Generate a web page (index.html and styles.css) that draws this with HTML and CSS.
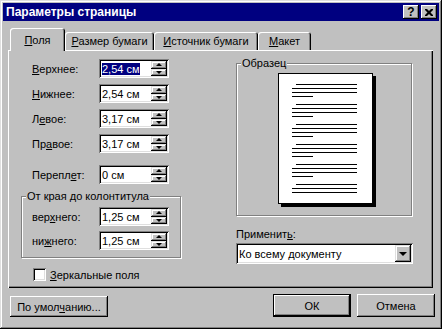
FILE: index.html
```html
<!DOCTYPE html>
<html lang="ru">
<head>
    <meta charset="UTF-8">
    <title>Параметры страницы</title>
    <link rel="stylesheet" href="styles.css">
</head>
<body>
    <div class="window">
        <div class="titlebar">
            <span class="title">Параметры страницы</span>
            <div class="title-btns">
                <span class="tbtn help">?</span>
                <span class="tbtn">
                    <svg width="8" height="7" viewBox="0 0 8 7"><path d="M0 0h2l2 2 2-2h2v1L5.5 3.5 8 6v1H6L4 5 2 7H0V6l2.5-2.5L0 1z" fill="#000"/></svg>
                </span>
            </div>
        </div>

        <div class="tabs">
            <div class="tab active" style="width:55px"><u>П</u>оля</div>
            <div class="tab" style="width:89px"><u>Р</u>азмер бумаги</div>
            <div class="tab" style="width:104px"><u>И</u>сточник бумаги</div>
            <div class="tab" style="width:53px"><u>М</u>акет</div>
        </div>

        <div class="panel">
            <div class="col-left">
                <div class="row">
                    <label><u>В</u>ерхнее:</label>
                    <div class="spin"><span class="val"><span class="sel">2,54 см</span></span><div class="arrows"><span class="arr"><i class="up"></i></span><span class="arr"><i class="down"></i></span></div></div>
                </div>
                <div class="row">
                    <label><u>Н</u>ижнее:</label>
                    <div class="spin"><span class="val">2,54 см</span><div class="arrows"><span class="arr"><i class="up"></i></span><span class="arr"><i class="down"></i></span></div></div>
                </div>
                <div class="row">
                    <label>Л<u>е</u>вое:</label>
                    <div class="spin"><span class="val">3,17 см</span><div class="arrows"><span class="arr"><i class="up"></i></span><span class="arr"><i class="down"></i></span></div></div>
                </div>
                <div class="row">
                    <label>Пр<u>а</u>вое:</label>
                    <div class="spin"><span class="val">3,17 см</span><div class="arrows"><span class="arr"><i class="up"></i></span><span class="arr"><i class="down"></i></span></div></div>
                </div>
                <div class="row spaced">
                    <label>Перепл<u>е</u>т:</label>
                    <div class="spin"><span class="val">0 см</span><div class="arrows"><span class="arr"><i class="up"></i></span><span class="arr"><i class="down"></i></span></div></div>
                </div>

                <div class="group footers">
                    <span class="group-title">От края до колонтитула</span>
                    <div class="row">
                        <label>вер<u>х</u>него:</label>
                        <div class="spin"><span class="val">1,25 см</span><div class="arrows"><span class="arr"><i class="up"></i></span><span class="arr"><i class="down"></i></span></div></div>
                    </div>
                    <div class="row">
                        <label>ни<u>ж</u>него:</label>
                        <div class="spin"><span class="val">1,25 см</span><div class="arrows"><span class="arr"><i class="up"></i></span><span class="arr"><i class="down"></i></span></div></div>
                    </div>
                </div>

                <div class="check-row">
                    <span class="checkbox"></span>
                    <span><u>З</u>еркальные поля</span>
                </div>
            </div>

            <div class="col-right">
                <div class="group sample">
                    <span class="group-title">Образец</span>
                    <svg class="page" width="99" height="135" viewBox="0 0 99 135">
                        <rect x="3" y="3" width="95" height="131" fill="#000"/>
                        <rect x="0.5" y="0.5" width="94" height="130" fill="#fff" stroke="#000"/>
                        <g fill="#000">
                            <rect x="18" y="11" width="61" height="1"/><rect x="14" y="15" width="65" height="1"/><rect x="14" y="19" width="65" height="1"/><rect x="14" y="23" width="21" height="1"/>
                            <rect x="18" y="31" width="61" height="1"/><rect x="14" y="35" width="65" height="1"/><rect x="14" y="39" width="65" height="1"/><rect x="14" y="43" width="21" height="1"/>
                            <rect x="18" y="51" width="61" height="1"/><rect x="14" y="55" width="65" height="1"/><rect x="14" y="59" width="65" height="1"/><rect x="14" y="63" width="21" height="1"/>
                            <rect x="18" y="71" width="61" height="1"/><rect x="14" y="75" width="65" height="1"/><rect x="14" y="79" width="65" height="1"/><rect x="14" y="83" width="21" height="1"/>
                            <rect x="18" y="91" width="61" height="1"/><rect x="14" y="95" width="65" height="1"/><rect x="14" y="99" width="65" height="1"/><rect x="14" y="103" width="21" height="1"/>
                            <rect x="18" y="111" width="61" height="1"/><rect x="14" y="115" width="65" height="1"/><rect x="14" y="119" width="65" height="1"/>
                        </g>
                    </svg>
                </div>
                <div class="apply-label">Применит<u>ь</u>:</div>
                <div class="select">
                    <span class="val">Ко всему документу</span>
                    <span class="drop"><i class="down big"></i></span>
                </div>
            </div>
        </div>

        <div class="footer">
            <button class="btn default-btn">По умол<u>ч</u>анию...</button>
            <div class="btn-group">
                <button class="btn ok">ОК</button>
                <button class="btn">Отмена</button>
            </div>
        </div>
    </div>
</body>
</html>
```

FILE: styles.css
```css
body {
    margin: 0;
    font-family: "Liberation Sans", Arial, sans-serif;
    font-size: 11px;
    color: #000;
    background: #c0c0c0;
}
u {
    text-decoration: underline;
    text-underline-offset: 1px;
}
.window {
    width: 442px;
    height: 329px;
    box-sizing: border-box;
    padding: 3px;
    background: #c0c0c0;
    box-shadow: inset -1px -1px #000, inset 1px 1px #dfdfdf, inset -2px -2px #808080, inset 2px 2px #fff;
}
.titlebar {
    height: 18px;
    background: #000080;
    color: #fff;
    display: flex;
    align-items: center;
    justify-content: space-between;
    padding: 0 2px 0 3px;
}
.title {
    font-weight: bold;
    font-size: 12px;
}
.title-btns {
    display: flex;
    gap: 2px;
}
.tbtn {
    width: 16px;
    height: 14px;
    box-sizing: border-box;
    background: #c0c0c0;
    color: #000;
    display: flex;
    align-items: center;
    justify-content: center;
    box-shadow: inset -1px -1px #000, inset 1px 1px #fff, inset -2px -2px #808080;
}
.tbtn.help {
    font-weight: bold;
    font-size: 12px;
    padding-bottom: 1px;
}

/* вкладки */
.tabs {
    display: flex;
    align-items: flex-end;
    height: 22px;
    margin: 7px 0 0 7px;
    position: relative;
    z-index: 1;
}
.tab {
    height: 18px;
    box-sizing: border-box;
    padding-top: 3px;
    text-align: center;
    background: #c0c0c0;
    border-radius: 3px 3px 0 0;
    box-shadow: inset 1px 1px #fff, inset -1px 0 #000, inset -2px 0 #808080;
}
.tab + .tab {
    margin-left: 0;
}
.tab.active {
    height: 23px;
    margin-bottom: -1px;
    padding-top: 6px;
}
.panel {
    margin-left: 5px;
    width: 425px;
    height: 238px;
    box-sizing: border-box;
    display: flex;
    box-shadow: inset 1px 1px #fff, inset -1px -1px #000, inset -2px -2px #808080;
}

/* поля */
.col-left {
    margin: 9px 0 0 13px;
    width: 160px;
}
.row {
    display: flex;
    align-items: center;
    height: 19px;
    padding-left: 11px;
    margin-bottom: 6px;
}
.row.spaced {
    margin-top: 12px;
}
.row label {
    width: 67px;
}
.spin, .select {
    height: 19px;
    box-sizing: border-box;
    background: #fff;
    display: flex;
    align-items: center;
    padding: 2px;
    box-shadow: inset 1px 1px #808080, inset -1px -1px #fff, inset 2px 2px #000, inset -2px -2px #dfdfdf;
}
.spin {
    width: 70px;
}
.val {
    flex: 1;
    padding-left: 1px;
    white-space: nowrap;
}
.sel {
    background: #000080;
    color: #fff;
}
.arrows {
    width: 16px;
    height: 15px;
    display: flex;
    flex-direction: column;
}
.arr, .drop {
    flex: 1;
    background: #c0c0c0;
    display: flex;
    align-items: center;
    justify-content: center;
    box-shadow: inset -1px -1px #000, inset 1px 1px #dfdfdf, inset -2px -2px #808080, inset 2px 2px #fff;
}
.up, .down {
    width: 0;
    height: 0;
    border-left: 3px solid transparent;
    border-right: 3px solid transparent;
}
.up {
    border-bottom: 3px solid #000;
}
.down {
    border-top: 3px solid #000;
}
.down.big {
    border-left-width: 4px;
    border-right-width: 4px;
    border-top-width: 4px;
}
.group {
    position: relative;
    box-sizing: border-box;
    border: 1px solid #808080;
    box-shadow: inset 1px 1px #fff, 1px 1px #fff;
}
.group-title {
    position: absolute;
    top: -7px;
    left: 4px;
    padding: 0 1px;
    background: #c0c0c0;
    line-height: 13px;
}
.group.footers {
    margin-top: 12px;
    height: 62px;
    padding: 10px 0 0 0;
}
.group.footers .row {
    padding-left: 10px;
    margin-bottom: 5px;
}
.check-row {
    display: flex;
    align-items: center;
    gap: 4px;
    margin-top: 10px;
    padding-left: 12px;
}
.checkbox {
    width: 13px;
    height: 13px;
    box-sizing: border-box;
    background: #fff;
    box-shadow: inset 1px 1px #808080, inset -1px -1px #fff, inset 2px 2px #000, inset -2px -2px #dfdfdf;
}

/* образец */
.col-right {
    margin: 13px 0 0 55px;
    width: 177px;
}
.group.sample {
    width: 176px;
    height: 153px;
    padding-top: 9px;
}
.page {
    display: block;
    margin-left: 41px;
}
.apply-label {
    margin-top: 12px;
    line-height: 13px;
}
.select {
    margin-top: 2px;
    height: 21px;
    width: 177px;
}
.drop {
    flex: 0 0 16px;
    height: 17px;
}

/* кнопки */
.footer {
    display: flex;
    align-items: flex-end;
    justify-content: space-between;
    margin-top: 6px;
    padding: 0 4px 0 7px;
}
.btn {
    font: inherit;
    color: #000;
    background: #c0c0c0;
    border: none;
    padding: 0;
    height: 23px;
    width: 78px;
    box-shadow: inset -1px -1px #000, inset 1px 1px #fff, inset -2px -2px #808080;
}
.default-btn {
    width: 98px;
    height: 21px;
}
.btn-group {
    display: flex;
    gap: 6px;
}
.btn.ok {
    border: 1px solid #000;
    box-shadow: inset -1px -1px #000, inset 1px 1px #fff, inset -2px -2px #808080;
}
```
